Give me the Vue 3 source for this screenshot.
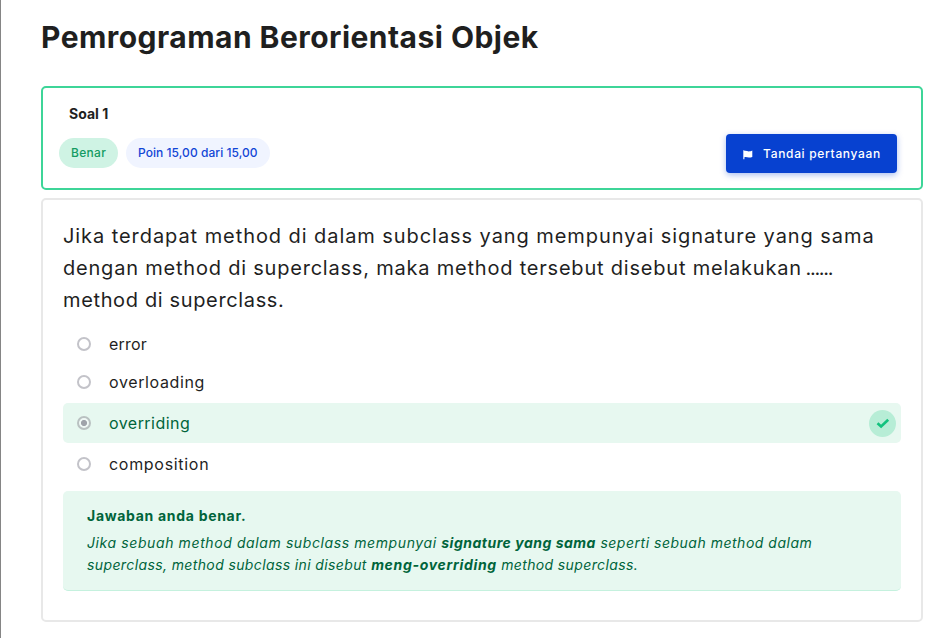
<script setup>
const options = [
  { label: 'error', cls: 'w-error' },
  { label: 'overloading', cls: 'w-overloading' },
  { label: 'overriding', cls: 'w-overriding', correct: true },
  { label: 'composition', cls: 'w-composition' },
]
</script>

<template>
  <main class="page">
    <h1 class="title"><span>Pemrograman Berorientasi Objek</span></h1>

    <section class="info">
      <div class="summary">
        <h2 class="number"><span>Soal 1</span></h2>
        <div class="pills">
          <span class="pill state"><span>Benar</span></span>
          <span class="pill grade"><span>Poin 15,00 dari 15,00</span></span>
        </div>
      </div>
      <button class="flag" type="button">
        <svg class="flag-icon" viewBox="0 0 10 10" aria-hidden="true">
          <path d="M.3.2H1.4V.9C3 .5 4.3 1.4 5.9 1.4 7 1.4 7.9 1.1 9.3.5V6.9C8.2 7.3 7.1 7.5 6 7.5 4.3 7.5 3.2 6.7 1.4 7.2V9.3H.3Z" fill="#fff" />
        </svg>
        <span class="flag-label">Tandai pertanyaan</span>
      </button>
    </section>

    <section class="content">
      <p class="question">
        <span class="q1">Jika terdapat method di dalam subclass yang mempunyai signature yang sama</span><br />
        <span class="q2">dengan method di superclass, maka method tersebut disebut melakukan</span> <span class="dots">......</span><br />
        <span class="q3">method di superclass.</span>
      </p>

      <div class="answers">
        <div v-for="o in options" :key="o.label" class="answer" :class="{ correct: o.correct }">
          <span class="radio"></span>
          <span class="label" :class="o.cls">{{ o.label }}</span>
          <span v-if="o.correct" class="badge">
            <svg viewBox="0 0 14 11" aria-hidden="true">
              <path d="M1.5 5.2 5.1 8.5 12.2 1.7" fill="none" stroke="#12c27e" stroke-width="2.6" />
            </svg>
          </span>
        </div>
      </div>

      <div class="feedback">
        <p class="verdict"><span>Jawaban anda benar.</span></p>
        <p class="explain">
          <span class="e1">Jika sebuah method dalam subclass mempunyai </span><b class="e2">signature yang sama</b><span class="e3"> seperti sebuah method dalam</span><br />
          <span class="e4">superclass, method subclass ini disebut </span><b class="e5">meng-overriding</b><span class="e6"> method superclass.</span>
        </p>
      </div>
    </section>
  </main>
</template>

<style>
body {
  background: #fff;
}
</style>

<style scoped>
.page {
  box-sizing: border-box;
  min-height: 638px;
  border-left: 1px solid #858585;
  padding: 14px 16px 16px 40px;
  font-family: Inter, 'Open Sans', sans-serif;
  color: #1f1f1f;
  white-space: nowrap;
}
h1, h2, p {
  margin: 0;
}
.title {
  font-size: 30px;
  line-height: 46px;
  font-weight: 700;
  letter-spacing: 0.46px;
  margin-bottom: 26px;
}
.info {
  box-sizing: border-box;
  height: 104px;
  border: 2px solid #3dd598;
  border-radius: 5px;
  padding: 16px 24px 0 16px;
  display: flex;
  justify-content: space-between;
  align-items: flex-start;
}
.number {
  font-size: 14px;
  line-height: 20px;
  font-weight: 700;
  padding-left: 10px;
  margin-bottom: 14px;
}
.pills {
  display: flex;
  gap: 8px;
}
.pill {
  box-sizing: border-box;
  height: 30px;
  line-height: 30px;
  border-radius: 15px;
  font-size: 12px;
  font-weight: 500;
  padding-left: 12px;
}
.state {
  width: 59px;
  background: #cff3e4;
  color: #149b62;
  letter-spacing: 0.3px;
}
.grade {
  width: 144px;
  background: #f0f4ff;
  color: #1246d6;
  letter-spacing: 0.05px;
}
.flag {
  width: 171px;
  height: 39px;
  margin-top: 30px;
  padding: 0 0 0 17px;
  border: 0;
  border-radius: 4px;
  background: #0741d0;
  box-shadow: 0 2px 6px rgba(7, 65, 208, 0.35);
  color: #fff;
  font: 500 12px/39px Inter, 'Open Sans', sans-serif;
  letter-spacing: 0.68px;
  display: flex;
  align-items: center;
}
.flag-icon {
  width: 10px;
  height: 10px;
  margin: 2px 10px 0 0;
}
.content {
  box-sizing: border-box;
  height: 424px;
  margin-top: 8px;
  border: 2px solid #e8e8e8;
  border-radius: 5px;
  padding: 20px;
}
.question {
  font-size: 20px;
  line-height: 32px;
}
.q1 { letter-spacing: 0.93px; }
.q2 { letter-spacing: 0.79px; }
.q3 { letter-spacing: 0.64px; }
.dots {
  letter-spacing: -1.3px;
  margin-left: -2px;
}
.w-error { letter-spacing: 0.2px; }
.w-overloading { letter-spacing: 0.62px; }
.w-overriding { letter-spacing: 0.45px; }
.w-composition { letter-spacing: 0.7px; }
.answers {
  margin-top: 9px;
}
.answer {
  height: 38px;
  display: flex;
  align-items: center;
  padding: 0 5px 0 14px;
  font-size: 16px;
}
.answer.correct {
  height: 40px;
  margin: 2px 0;
  border-radius: 5px;
  background: #e7f8f0;
  color: #00643b;
}
.radio {
  box-sizing: border-box;
  width: 14px;
  height: 14px;
  border: 2px solid #c3c3c9;
  border-radius: 50%;
  margin-right: 18px;
  background: #fff;
}
.correct .radio {
  border-color: #b9c1c1;
  background: radial-gradient(circle, #9fa3aa 0 2.7px, #eff8f5 3.4px);
}
.badge {
  width: 27px;
  height: 27px;
  margin-left: auto;
  border-radius: 50%;
  background: #b7edd6;
  display: flex;
  align-items: center;
  justify-content: center;
}
.badge svg {
  width: 14px;
  height: 11px;
}
.feedback {
  box-sizing: border-box;
  height: 100px;
  margin-top: 8px;
  padding: 14px 24px;
  border-bottom: 1px solid #c5f1de;
  border-radius: 5px;
  background: #e7f8f0;
  color: #00643b;
  font-size: 14px;
  line-height: 22px;
}
.verdict {
  font-weight: 700;
  letter-spacing: 0.7px;
  margin-bottom: 5px;
}
.explain {
  font-style: italic;
}
.explain span,
.explain b {
  white-space: pre;
}
.e1 { letter-spacing: 0.6px; }
.e2 { letter-spacing: 0.51px; }
.e3 { letter-spacing: 0.51px; }
.e4 { letter-spacing: 0.38px; }
.e5 { letter-spacing: 0.68px; }
.e6 { letter-spacing: 0.37px; }
</style>
